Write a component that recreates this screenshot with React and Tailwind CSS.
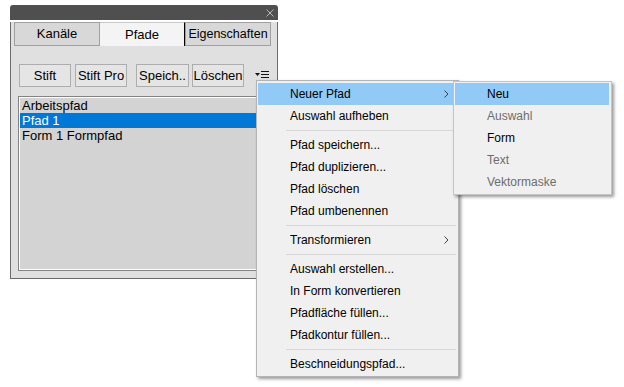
import React from "react";

const mainItems = [
  { label: "Neuer Pfad", sub: true, active: true },
  { label: "Auswahl aufheben" },
  { sep: true },
  { label: "Pfad speichern..." },
  { label: "Pfad duplizieren..." },
  { label: "Pfad löschen" },
  { label: "Pfad umbenennen" },
  { sep: true },
  { label: "Transformieren", sub: true },
  { sep: true },
  { label: "Auswahl erstellen..." },
  { label: "In Form konvertieren" },
  { label: "Pfadfläche füllen..." },
  { label: "Pfadkontur füllen..." },
  { sep: true },
  { label: "Beschneidungspfad..." },
];

const subItems = [
  { label: "Neu", active: true },
  { label: "Auswahl", disabled: true },
  { label: "Form" },
  { label: "Text", disabled: true },
  { label: "Vektormaske", disabled: true },
];

const Chevron = () => (
  <svg width="5" height="8" viewBox="0 0 5 8" className="ml-auto mr-[8px]">
    <path d="M0.5 0.5 L4 4 L0.5 7.5" fill="none" stroke="#404040" strokeWidth="1" />
  </svg>
);

const MenuIcon = () => (
  <svg width="14" height="10" viewBox="0 0 14 10">
    <path d="M0 3 L5 3 L2.5 6 Z" fill="#111" />
    <rect x="6" y="1" width="8" height="1" fill="#111" />
    <rect x="6" y="4" width="8" height="1" fill="#111" />
    <rect x="6" y="7" width="8" height="1" fill="#111" />
  </svg>
);

const Button = ({ children, className = "" }) => (
  <div
    className={`w-[52px] h-[23px] flex items-center justify-center border border-[#adadad] bg-[#e5e5e5] text-[13px] text-black ${className}`}
  >
    {children}
  </div>
);

export default function App() {
  return (
    <div className="relative w-[624px] h-[387px] bg-white overflow-hidden font-['Liberation_Sans',Arial,sans-serif]">
      {/* Panel */}
      <div className="pt-[5px] pl-[10px]">
        <div className="w-[268px]">
          <div className="h-[15px] bg-[#4f4f4f] rounded-t-[3px] flex items-center justify-end pr-[4px]">
            <svg width="8" height="8" viewBox="0 0 8 8">
              <path d="M0.5 0.5 L7.5 7.5 M7.5 0.5 L0.5 7.5" stroke="#b8b8b8" strokeWidth="1" />
            </svg>
          </div>
          <div className="h-[257px] bg-[#e0e0e0] border-x border-b border-[#6a6a6a] px-[3px]">
            {/* Tabs */}
            <div className="flex mt-[2px] h-[24px] text-[13px] text-black">
              <div className="w-[86px] border border-[#a0a0a0] bg-[#d8d8d8] flex items-center justify-center">
                Kanäle
              </div>
              <div className="w-[85px] border-t border-[#c8c8c8] border-r border-r-black bg-[#f4f4f4] flex items-center justify-center">
                Pfade
              </div>
              <div className="w-[86px] border border-[#a0a0a0] bg-[#d8d8d8] flex items-center justify-center text-[12.5px]">
                Eigenschaften
              </div>
            </div>

            {/* Buttons */}
            <div className="flex items-center mt-[18px] pl-[5px]">
              <Button>Stift</Button>
              <Button className="ml-[4px]">Stift Pro</Button>
              <Button className="ml-[9px] w-[53px]">Speich..</Button>
              <Button className="ml-[3px]">Löschen</Button>
              <div className="ml-[11px] mb-[2px]">
                <MenuIcon />
              </div>
            </div>

            {/* List */}
            <div className="mt-[9px] ml-[4px] w-[253px] h-[175px] border border-[#838383]">
              <div className="h-full border border-white bg-[#d3d3d3] text-[13px] leading-[15px]">
                <div className="h-[15px] pl-[2px] text-black">Arbeitspfad</div>
                <div className="h-[15px] pl-[2px] bg-[#0078d7] text-white">Pfad 1</div>
                <div className="h-[15px] pl-[2px] text-black">Form 1 Formpfad</div>
              </div>
            </div>
          </div>
        </div>
      </div>

      {/* Context menu */}
      <div className="absolute left-[256px] top-[80px] w-[203px] h-[297px] bg-[#f0f0f0] border border-[#b4b4b4] px-[1px] pt-[2px] pb-[1px] shadow-[2px_2px_3px_rgba(0,0,0,0.4)] text-[12px]">
        {mainItems.map((it, i) =>
          it.sep ? (
            <div key={i} className="h-[7px] flex items-center pl-[28px] pr-[1px]">
              <div className="h-px w-full bg-[#d7d7d7]" />
            </div>
          ) : (
            <div
              key={i}
              className={`h-[22px] flex items-center pl-[32px] text-black ${it.active ? "bg-[#91c9f7]" : ""}`}
            >
              {it.label}
              {it.sub && <Chevron />}
            </div>
          )
        )}
      </div>

      {/* Submenu */}
      <div className="absolute left-[453px] top-[81px] w-[159px] h-[114px] bg-[#f0f0f0] border border-[#c4c4c4] pl-[1px] pr-[2px] pt-[1px] pb-[1px] shadow-[2px_2px_3px_rgba(0,0,0,0.4)] text-[12px]">
        {subItems.map((it, i) => (
          <div
            key={i}
            className={`h-[22px] flex items-center pl-[32px] ${it.active ? "bg-[#91c9f7]" : ""} ${it.disabled ? "text-[#6d6d6d]" : "text-black"}`}
          >
            {it.label}
          </div>
        ))}
      </div>
    </div>
  );
}
